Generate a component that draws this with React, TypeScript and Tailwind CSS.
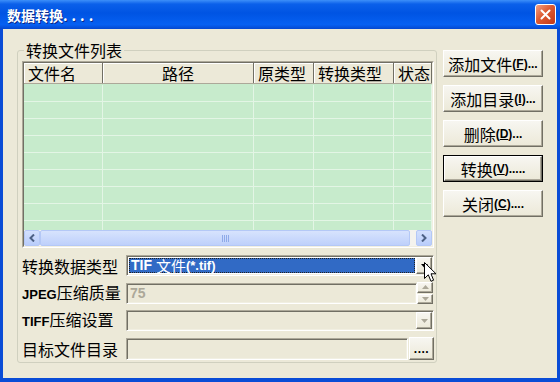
import React from "react";

const CJK = "font-['Noto_Sans_CJK_SC',sans-serif]";
const LAT = "font-['Liberation_Sans',sans-serif]";

const raised =
  "bg-[linear-gradient(to_bottom,#f7f6f1,#ece9d8)] border border-t-white border-l-white border-b-[#716f64] border-r-[#716f64] shadow-[inset_-1px_-1px_0_#aca899]";
const sunken =
  "border border-t-[#aca899] border-l-[#aca899] border-b-white border-r-white shadow-[inset_1px_1px_0_#716f64,inset_-1px_-1px_0_#f1efe2]";

const cols = ["w-[79px]", "w-[151px]", "w-[60px]", "w-[80px]", "flex-1"];
const headers = [
  { t: "文件名", c: "text-left pl-[4px]" },
  { t: "路径", c: "text-center" },
  { t: "原类型", c: "text-left pl-[4px]" },
  { t: "转换类型", c: "text-left pl-[4px]" },
  { t: "状态", c: "text-left pl-[4px]" },
];

function Tri({ gray = false, up = false }: { gray?: boolean; up?: boolean }) {
  return (
    <svg width="7" height="4" viewBox="0 0 7 4">
      <path
        d={up ? "M0 4 L7 4 L3.5 0 Z" : "M0 0 L7 0 L3.5 4 Z"}
        fill={gray ? "#aca899" : "#000"}
      />
    </svg>
  );
}

function ScrollArrow({ left }: { left?: boolean }) {
  return (
    <div className="w-[16px] rounded-[2px] border border-[#b4c8f6] bg-[linear-gradient(to_bottom,#d3e0fd,#b9cdfb)] flex items-center justify-center">
      <svg width="6" height="8" viewBox="0 0 6 8">
        <path
          d={left ? "M5 0.5 L1.5 4 L5 7.5" : "M1 0.5 L4.5 4 L1 7.5"}
          fill="none"
          stroke="#4d6185"
          strokeWidth="2"
        />
      </svg>
    </div>
  );
}

function Btn({ label, key1, dots, def }: { label: string; key1: string; dots: string; def?: boolean }) {
  const inner = (
    <div className={`${raised} h-full flex items-center justify-center`}>
      <span className={`${CJK} text-[16px] leading-[20px] text-black`}>{label}</span>
      <span className={`${LAT} text-[12px] font-bold leading-[20px] text-black`}>
        (<span className="underline">{key1}</span>){dots}
      </span>
    </div>
  );
  return def ? (
    <div className="h-[27px] border border-black">{inner}</div>
  ) : (
    <div className="h-[27px]">{inner}</div>
  );
}

export default function App() {
  return (
    <div className={`relative w-[560px] h-[382px] flex flex-col ${CJK} select-none`}>
      {/* title bar */}
      <div className="h-[29px] flex items-center justify-between pl-[7px] pr-[4px] bg-[linear-gradient(to_bottom,#3d8ff9_0%,#0b60ea_14%,#0054e3_45%,#0660f2_85%,#0447cf_100%)]">
        <span className={`${CJK} text-[14px] font-bold text-white leading-[18px] [text-shadow:1px_1px_0_#0a2a8a]`}>
          数据转换<span className="tracking-[4px]">....</span>
        </span>
        <div className="w-[21px] h-[21px] rounded-[3px] border border-white bg-[linear-gradient(135deg,#f2a184_0%,#dd5a32_45%,#c23817_100%)] flex items-center justify-center">
          <svg width="11" height="11" viewBox="0 0 11 11">
            <path d="M1.5 1.5 L9.5 9.5 M9.5 1.5 L1.5 9.5" stroke="white" strokeWidth="2" strokeLinecap="round" />
          </svg>
        </div>
      </div>

      {/* body */}
      <div className="flex-1 flex items-start bg-[#ece9d8] border-x-[3px] border-b-[4px] border-[#0a4cd6] pl-[14px] pt-[12px]">
        <fieldset className="w-[420px] border border-[#d0d0bf] rounded-[3px] pl-[4px] pr-[2px] pt-[2px] pb-[2px] m-0">
          <legend className="ml-[2px] px-[2px] text-[16px] leading-[18px] text-black">转换文件列表</legend>

          {/* list view */}
          <div className="border border-t-[#aca899] border-l-[#aca899] border-b-white border-r-white">
            <div className="border border-t-[#716f64] border-l-[#716f64] border-b-[#f1efe2] border-r-[#f1efe2] flex flex-col">
              <div className="h-[21px] flex bg-[#ece9d8] border-b border-[#aca899]">
                {headers.map((h, i) => (
                  <div
                    key={i}
                    className={`${cols[i]} h-[20px] whitespace-nowrap border-r border-[#716f64] shadow-[inset_1px_1px_0_#fff] ${h.c} text-[16px] leading-[20px] text-black`}
                  >
                    {h.t}
                  </div>
                ))}
              </div>
              <div className="h-[146px] pt-[1px] overflow-hidden bg-[#c7ebcc]">
                {Array.from({ length: 9 }).map((_, r) => (
                  <div key={r} className="h-[17px] flex border-b border-[#e3f5e5]">
                    {cols.map((c, i) => (
                      <div key={i} className={`${c} h-full border-r border-[#e3f5e5]`} />
                    ))}
                  </div>
                ))}
              </div>
              <div className="h-[16px] flex items-stretch bg-[#f4f3ee]">
                <ScrollArrow left />
                <div className="w-[370px] rounded-[2px] border border-[#b4c8f6] bg-[linear-gradient(to_bottom,#d7e3fd,#bed0fb)] flex items-center justify-center gap-[1px]">
                  {[0, 1, 2, 3].map((k) => (
                    <div key={k} className="w-[1px] h-[7px] bg-[#8faae8]" />
                  ))}
                </div>
                <div className="flex-1" />
                <ScrollArrow />
              </div>
            </div>
          </div>

          {/* form */}
          <div className="mt-[7px] flex flex-col">
            <div className="h-[21px] flex items-center">
              <div className="w-[104px] text-[16px] leading-[20px] text-black">转换数据类型</div>
              <div className={`w-[308px] h-[21px] ${sunken} bg-white flex p-[2px] gap-[1px]`}>
                <div className="flex-1 bg-[#316ac5] border border-dotted border-[#222] flex items-center pl-[1px] text-white leading-[15px] whitespace-nowrap">
                  <span className={`${LAT} font-bold text-[14px]`}>TIF&nbsp;</span>
                  <span className="text-[15px]">文件</span>
                  <span className={`${LAT} font-bold text-[13px]`}>(*.tif)</span>
                </div>
                <div className={`${raised} w-[16px] -my-[1px] -mr-[1px] flex items-center justify-center`}>
                  <Tri />
                </div>
              </div>
            </div>

            <div className="mt-[6px] h-[22px] flex items-center">
              <div className="w-[104px] text-[16px] leading-[20px] text-black whitespace-nowrap">
                <span className={`${LAT} font-bold text-[13px]`}>JPEG</span>压缩质量
              </div>
              <div className={`w-[291px] h-[21px] ${sunken} flex items-center pl-[3px]`}>
                <span className={`${LAT} font-bold text-[14px] text-[#aca899] leading-[16px]`}>75</span>
              </div>
              <div className="w-[16px] h-[22px] flex flex-col gap-[1px]">
                <div className={`${raised} flex-1 flex items-center justify-center`}>
                  <Tri gray up />
                </div>
                <div className={`${raised} flex-1 flex items-center justify-center`}>
                  <Tri gray />
                </div>
              </div>
            </div>

            <div className="mt-[6px] h-[21px] flex items-center">
              <div className="w-[104px] text-[16px] leading-[20px] text-black whitespace-nowrap">
                <span className={`${LAT} font-bold text-[13px]`}>TIFF</span>压缩设置
              </div>
              <div className={`w-[308px] h-[21px] ${sunken} flex justify-end p-[2px]`}>
                <div className={`${raised} w-[16px] -my-[1px] -mr-[1px] flex items-center justify-center`}>
                  <Tri gray />
                </div>
              </div>
            </div>

            <div className="mt-[6px] h-[23px] flex items-center">
              <div className="w-[104px] text-[16px] leading-[20px] text-black">目标文件目录</div>
              <div className={`w-[282px] h-[22px] ${sunken}`} />
              <div className={`${raised} ml-[1px] w-[25px] h-[23px] flex items-center justify-center`}>
                <span className={`${LAT} font-bold text-[12px] leading-[14px] text-black tracking-[0.5px]`}>....</span>
              </div>
            </div>
          </div>
        </fieldset>

        {/* buttons */}
        <div className="ml-[6px] mt-[9px] w-[100px] flex flex-col gap-[8px]">
          <Btn label="添加文件" key1="F" dots="..." />
          <Btn label="添加目录" key1="I" dots="..." />
          <Btn label="删除" key1="D" dots="..." />
          <Btn label="转换" key1="V" dots="....." def />
          <Btn label="关闭" key1="C" dots="...." />
        </div>
      </div>

      {/* mouse pointer */}
      <svg className="absolute left-[424px] top-[262px]" width="13" height="21" viewBox="0 0 13 21">
        <path
          d="M0.5 0.5 L0.5 16.5 L4.3 12.8 L7 19.3 L9.6 18.2 L7 11.8 L12 11.8 Z"
          fill="white"
          stroke="black"
          strokeWidth="1"
          strokeLinejoin="miter"
        />
      </svg>
    </div>
  );
}
